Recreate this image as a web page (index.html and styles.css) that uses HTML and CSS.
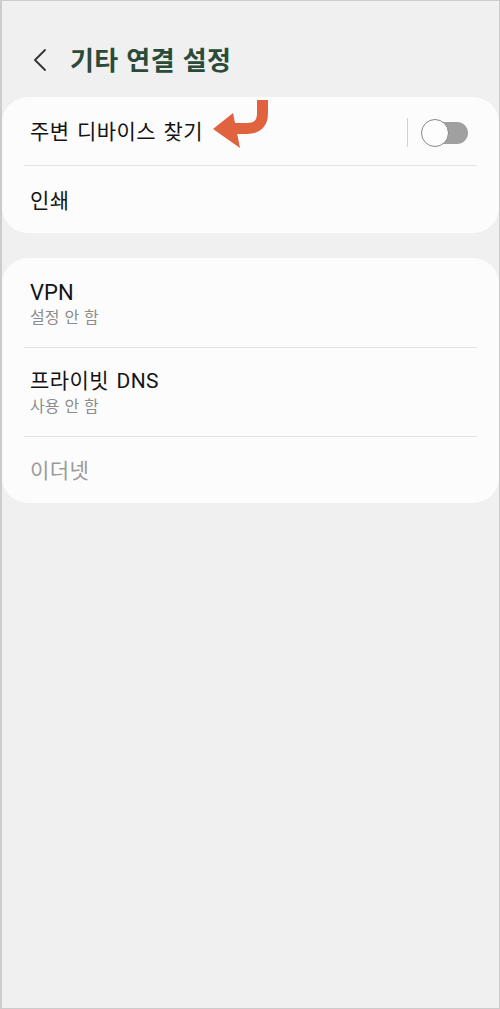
FILE: index.html
```html
<!DOCTYPE html>
<html lang="ko">
<head>
<meta charset="utf-8">
<link rel="stylesheet" href="styles.css">
</head>
<body>
<div class="frame">
  <header class="header">
    <svg class="back" width="14" height="22" viewBox="0 0 14 22"><path d="M12 1 L2 11 L12 21" fill="none" stroke="#333" stroke-width="1.8" stroke-linecap="round" stroke-linejoin="round"/></svg>
    <h1 class="title">기타 연결 설정</h1>
  </header>

  <section class="card">
    <div class="row row-toggle">
      <span class="label">주변 디바이스 찾기</span>
      <svg class="arrow" width="58" height="52" viewBox="0 0 58 52">
        <path d="M49.5 0 V13 Q49.5 28.5 34 28.5 H18" fill="none" stroke="#e0623e" stroke-width="11"/>
        <polygon points="0,29 20,13 27,48" fill="#e0623e"/>
      </svg>
      <div class="switch-wrap">
        <span class="sep"></span>
        <span class="switch"><span class="knob"></span></span>
      </div>
    </div>
    <div class="divider"></div>
    <div class="row row-last1">
      <span class="label">인쇄</span>
    </div>
  </section>

  <section class="card card2">
    <div class="row row-two">
      <span class="label latin">VPN</span>
      <span class="sub">설정 안 함</span>
    </div>
    <div class="divider"></div>
    <div class="row row-two row-two-b">
      <span class="label">프라이빗 DNS</span>
      <span class="sub">사용 안 함</span>
    </div>
    <div class="divider"></div>
    <div class="row row-last2">
      <span class="label disabled">이더넷</span>
    </div>
  </section>
</div>
</body>
</html>
```
FILE: styles.css
```css
* { box-sizing: border-box; }
html, body { margin: 0; padding: 0; }
body {
  font-family: Roboto, "Noto Sans CJK KR", sans-serif;
  background: #f0f0f0;
}
.frame {
  width: 500px;
  height: 1009px;
  background: #f0f0f0;
  border-top: 1px solid #cccccc;
  border-left: 2px solid #cccccc;
  border-right: 1px solid #cccccc;
  border-bottom: 1px solid #cccccc;
  overflow: hidden;
}
.header {
  height: 96px;
  display: flex;
  align-items: flex-start;
  padding: 48px 0 0 31px;
}
.back { display: block; margin-right: 23px; }
.title {
  margin: -5px 0 0 0;
  font-family: "Noto Sans CJK KR", sans-serif;
  font-size: 26px;
  font-weight: 700;
  line-height: 30px;
  color: #2b4b39;
  letter-spacing: 0.4px;
}
.card {
  background: #fcfcfc;
  border-radius: 26px;
}
.card2 { margin-top: 25px; }
.row {
  position: relative;
  display: flex;
  flex-direction: column;
  justify-content: center;
  padding: 0 28px;
}
.row-toggle {
  flex-direction: row;
  align-items: center;
  justify-content: space-between;
  height: 68px;
  padding-top: 3px;
  padding-right: 31px;
}
.row-last1 { height: 67px; padding-top: 3px; }
.row-two { height: 89px; padding-top: 1px; }
.row-two-b { height: 88px; }
.row-last2 { height: 66px; padding-top: 2px; }
.label {
  font-size: 21px;
  line-height: 27px;
  color: #141414;
  letter-spacing: 0.4px;
  word-spacing: 2px;
}
.latin { font-size: 22px; letter-spacing: 0; }
.disabled { color: #9b9b9b; }
.sub {
  font-size: 16px;
  line-height: 20px;
  color: #8c8c8c;
  margin-top: 2px;
  word-spacing: 1px;
}
.divider {
  height: 1px;
  background: #e4e4e4;
  margin: 0 22px;
}
.arrow {
  position: absolute;
  left: 211px;
  top: 3px;
}
.switch-wrap {
  display: flex;
  align-items: center;
}
.sep {
  width: 1px;
  height: 29px;
  background: #d2d2d2;
  margin-right: 14px;
}
.switch {
  position: relative;
  display: block;
  width: 46px;
  height: 22px;
  border-radius: 11px;
  background: #a0a0a0;
}
.knob {
  position: absolute;
  left: -1px;
  top: -3px;
  width: 28px;
  height: 28px;
  border-radius: 50%;
  background: #fdfdfd;
  border: 1.5px solid #868686;
}
```
